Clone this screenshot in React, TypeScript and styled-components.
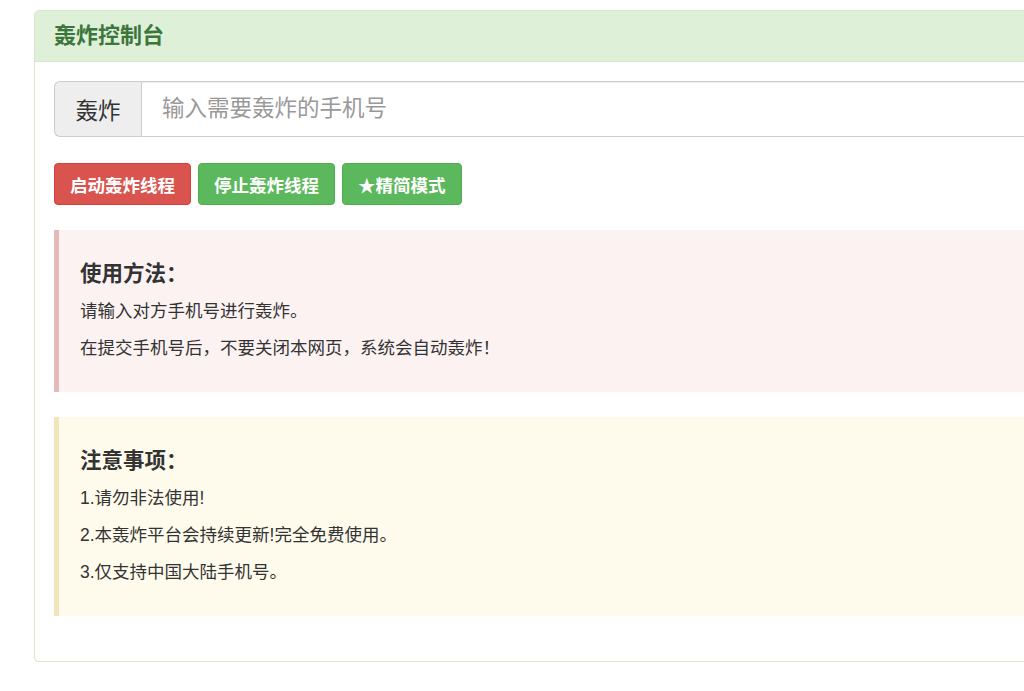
import React from "react";
import styled, { createGlobalStyle } from "styled-components";

const GlobalStyle = createGlobalStyle`
  html, body {
    margin: 0;
    padding: 0;
    background: #fff;
    overflow: hidden;
  }
  body {
    font-family: "Liberation Sans", "Noto Sans CJK SC", sans-serif;
    color: #333;
  }
`;

const Page = styled.div`
  padding: 10px 0 0 34px;
  width: 1300px;
`;

const Panel = styled.section`
  width: 1170px;
  border: 1px solid #d6e9c6;
  border-radius: 5px;
  background: #fff;
  box-shadow: 0 1px 1px rgba(0, 0, 0, 0.05);
`;

const PanelHeading = styled.header`
  background: #dff0d8;
  border-bottom: 1px solid #d6e9c6;
  border-radius: 4px 4px 0 0;
  padding: 12px 19px;
  height: 26px;
  line-height: 26px;
  font-size: 22px;
  font-weight: 700;
  color: #3c763d;
`;

const PanelBody = styled.div`
  padding: 19px 19px 20px;
`;

const InputGroup = styled.div`
  display: flex;
  height: 56px;
  margin-bottom: 26px;
`;

const Addon = styled.span`
  display: flex;
  align-items: center;
  justify-content: center;
  width: 86px;
  background: #eee;
  border: 1px solid #ccc;
  border-right: none;
  border-radius: 6px 0 0 6px;
  font-size: 22.5px;
  color: #333;
`;

const PhoneInput = styled.input`
  flex: 1;
  border: 1px solid #ccc;
  border-radius: 0 6px 6px 0;
  box-shadow: inset 0 1px 1px rgba(0, 0, 0, 0.075);
  padding: 0 20px;
  font-size: 22.5px;
  font-family: inherit;
  color: #555;
  outline: none;
  &::placeholder {
    color: #999;
  }
`;

const Toolbar = styled.div`
  display: flex;
  gap: 7px;
  margin-bottom: 25px;
`;

const Button = styled.button<{ $variant: "danger" | "success" }>`
  height: 42px;
  padding: 0 15px;
  border-radius: 4px;
  border: 1px solid ${(p) => (p.$variant === "danger" ? "#d43f3a" : "#4cae4c")};
  background: ${(p) => (p.$variant === "danger" ? "#d9534f" : "#5cb85c")};
  color: #fff;
  font-family: inherit;
  font-size: 17.5px;
  font-weight: 700;
  cursor: pointer;
`;

const Callout = styled.div<{ $tone: "danger" | "warning" }>`
  padding: 20px 20px 20px 21px;
  margin-bottom: 25px;
  border-left: 5px solid ${(p) => (p.$tone === "danger" ? "#e4b9b9" : "#f1e5bc")};
  background: ${(p) => (p.$tone === "danger" ? "#fcf2f2" : "#fefbed")};
`;

const CalloutTitle = styled.h4`
  margin: 10px 0;
  font-size: 21.5px;
  line-height: 28px;
  font-weight: 700;
  color: #333;
`;

const CalloutText = styled.p`
  margin: 0 0 10px;
  font-size: 17.5px;
  line-height: 27px;
  color: #333;
`;

export default function App() {
  return (
    <>
      <GlobalStyle />
      <Page>
        <Panel>
          <PanelHeading>轰炸控制台</PanelHeading>
          <PanelBody>
            <InputGroup>
              <Addon>轰炸</Addon>
              <PhoneInput placeholder="输入需要轰炸的手机号" />
            </InputGroup>
            <Toolbar>
              <Button $variant="danger">启动轰炸线程</Button>
              <Button $variant="success">停止轰炸线程</Button>
              <Button $variant="success">★精简模式</Button>
            </Toolbar>
            <Callout $tone="danger">
              <CalloutTitle>使用方法：</CalloutTitle>
              <CalloutText>请输入对方手机号进行轰炸。</CalloutText>
              <CalloutText>在提交手机号后，不要关闭本网页，系统会自动轰炸！</CalloutText>
            </Callout>
            <Callout $tone="warning">
              <CalloutTitle>注意事项：</CalloutTitle>
              <CalloutText>1.请勿非法使用!</CalloutText>
              <CalloutText>2.本轰炸平台会持续更新!完全免费使用。</CalloutText>
              <CalloutText>3.仅支持中国大陆手机号。</CalloutText>
            </Callout>
          </PanelBody>
        </Panel>
      </Page>
    </>
  );
}
